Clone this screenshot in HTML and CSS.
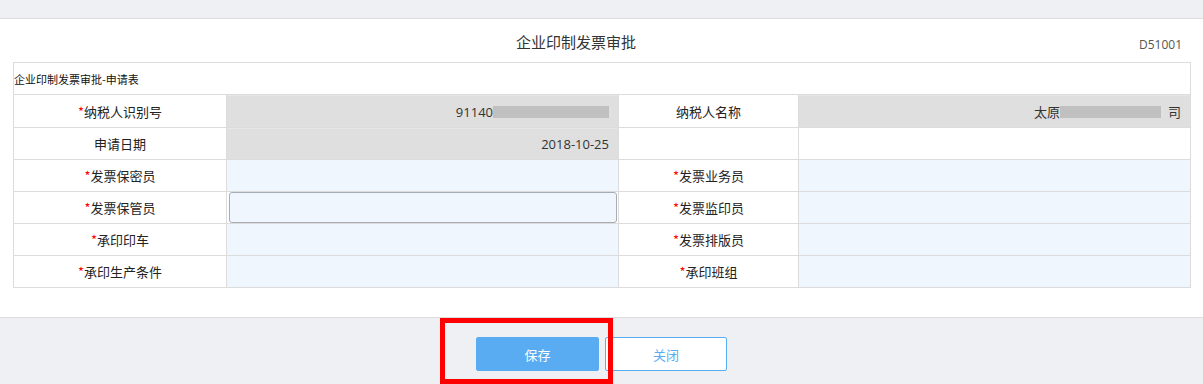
FILE: index.html
```html
<!DOCTYPE html>
<html>
<head>
  <meta charset="utf-8">
  <title>企业印制发票审批</title>
  <link rel="stylesheet" href="styles.css">
</head>
<body>
  <div class="topbar"></div>
  <div class="page">
    <div class="header">
      <h1 class="title">企业印制发票审批</h1>
      <span class="code">D51001</span>
    </div>
    <table class="form">
      <colgroup>
        <col class="c-label1">
        <col class="c-value">
        <col class="c-label2">
        <col class="c-value">
      </colgroup>
      <tr>
        <td colspan="4" class="caption">企业印制发票审批-申请表</td>
      </tr>
      <tr class="tall">
        <td class="label"><i>*</i>纳税人识别号</td>
        <td class="value readonly"><div class="field">91140<span class="mask" style="width:116px"></span></div></td>
        <td class="label">纳税人名称</td>
        <td class="value readonly"><div class="field">太原<span class="mask" style="width:101px"></span><span class="tail">司</span></div></td>
      </tr>
      <tr>
        <td class="label">申请日期</td>
        <td class="value readonly"><div class="field">2018-10-25</div></td>
        <td class="label"></td>
        <td class="value"></td>
      </tr>
      <tr>
        <td class="label"><i>*</i>发票保密员</td>
        <td class="value edit"><div class="field"></div></td>
        <td class="label"><i>*</i>发票业务员</td>
        <td class="value edit"><div class="field"></div></td>
      </tr>
      <tr>
        <td class="label"><i>*</i>发票保管员</td>
        <td class="value edit"><div class="field focus"></div></td>
        <td class="label"><i>*</i>发票监印员</td>
        <td class="value edit"><div class="field"></div></td>
      </tr>
      <tr>
        <td class="label"><i>*</i>承印印车</td>
        <td class="value edit"><div class="field"></div></td>
        <td class="label"><i>*</i>发票排版员</td>
        <td class="value edit"><div class="field"></div></td>
      </tr>
      <tr>
        <td class="label"><i>*</i>承印生产条件</td>
        <td class="value edit"><div class="field"></div></td>
        <td class="label"><i>*</i>承印班组</td>
        <td class="value edit"><div class="field"></div></td>
      </tr>
    </table>
  </div>
  <div class="footer">
    <button class="btn primary">保存</button>
    <button class="btn plain">关闭</button>
    <div class="highlight"></div>
  </div>
</body>
</html>
```

FILE: styles.css
```css
html, body {
  margin: 0;
  height: 100%;
}
body {
  font-family: "Noto Sans CJK SC", "Noto Sans", sans-serif;
  color: #333;
  background: #eff0f4;
  display: flex;
  flex-direction: column;
}
.topbar {
  height: 18px;
  background: #eff0f4;
  border-bottom: 1px solid #dcdcdc;
}
.page {
  background: #fff;
  padding: 0 13px 29px;
  border-bottom: 1px solid #dcdcdc;
}
.header {
  display: flex;
  height: 43px;
}
.title {
  flex: 1;
  margin: 0;
  text-align: center;
  font-size: 15px;
  font-weight: normal;
  line-height: 1;
  padding-top: 15px;
  color: #333;
}
.code {
  align-self: flex-end;
  font-family: "Open Sans", sans-serif;
  font-size: 12px;
  line-height: 1;
  color: #555;
  margin-right: 8px;
  margin-bottom: 11px;
}
.form {
  width: 100%;
  border-collapse: collapse;
  table-layout: fixed;
  border: 1px solid #d9d9d9;
}
.c-label1 { width: 213px; }
.c-label2 { width: 180px; }
.c-value { width: 392px; }
.form td {
  border: 1px solid #dcdcdc;
  height: 31px;
  padding: 0;
  font-size: 13px;
}
.form tr.tall td {
  height: 32px;
}
.form td.caption {
  font-size: 11px;
  color: #111;
  text-align: left;
}
.label {
  text-align: center;
  color: #222;
  background: #fff;
}
.label i {
  font-style: normal;
  color: #f00;
}
.field {
  height: 100%;
  min-height: 31px;
  box-sizing: border-box;
  display: flex;
  align-items: center;
  justify-content: flex-end;
  padding-right: 9px;
  font-family: "Open Sans", "Noto Sans CJK SC", sans-serif;
  color: #333;
}
.tall .field {
  min-height: 32px;
}
.readonly .field {
  background: #dfdfdf;
  border-top: 1px solid #e6e6e6;
}
.edit .field {
  background: #eff6fe;
}
.edit .field.focus {
  margin: 0 1px 0 2px;
  border: 1px solid #a9abb3;
  border-radius: 3px;
}
.mask {
  display: inline-block;
  height: 12px;
  background: #c0c0c0;
}
.tail {
  margin-left: 7px;
}
.footer {
  position: relative;
  flex: 1;
  display: flex;
  justify-content: center;
  align-items: flex-start;
  gap: 6px;
  padding-top: 19px;
}
.btn {
  height: 34px;
  box-sizing: border-box;
  font-family: inherit;
  font-size: 13px;
  border-radius: 2px;
  cursor: pointer;
}
.btn.primary {
  width: 123px;
  background: #59acf2;
  border: 1px solid #59acf2;
  color: #fff;
}
.btn.plain {
  width: 122px;
  background: #fff;
  border: 1px solid #59acf2;
  color: #59acf2;
}
.highlight {
  position: absolute;
  left: 440px;
  top: 0;
  width: 173px;
  height: 66px;
  box-sizing: border-box;
  border: 5px solid #f00;
}
```
